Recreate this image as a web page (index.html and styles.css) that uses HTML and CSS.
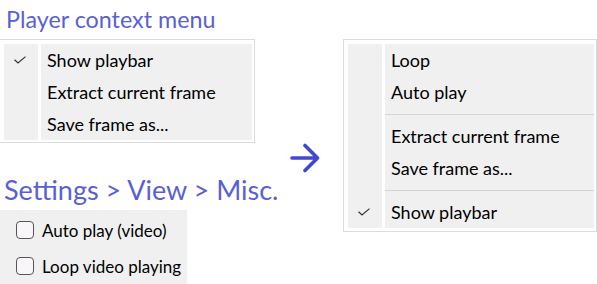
FILE: index.html
```html
<!DOCTYPE html>
<html>
<head>
  <title>Player context menu</title>
  <link rel="stylesheet" href="styles.css">
</head>
<body>
  <div class="page">
    <div class="left-col">
      <h2 class="title">Player context menu</h2>
      <div class="menu menu-old">
        <div class="gutter"></div>
        <div class="items">
          <div class="item"><span class="check"><svg width="12" height="8" viewBox="0 0 12 8"><polyline points="0.5,3.8 4,7 11.5,0.6" fill="none" stroke="#333" stroke-width="1.2"/></svg></span>Show playbar</div>
          <div class="item">Extract current frame</div>
          <div class="item">Save frame as...</div>
        </div>
      </div>

      <h2 class="title title-settings">Settings &gt; View &gt; Misc.</h2>
      <div class="settings">
        <label class="option"><span class="box"></span>Auto play (video)</label>
        <label class="option"><span class="box"></span>Loop video playing</label>
      </div>
    </div>

    <div class="arrow">
      <svg width="30" height="30" viewBox="0 0 30 30">
        <path d="M2 15 H27 M15 2.5 L27.5 15 L15 27.5" fill="none" stroke="#4148cf" stroke-width="3.6" stroke-linecap="round" stroke-linejoin="round"/>
      </svg>
    </div>

    <div class="menu menu-new">
      <div class="gutter"></div>
      <div class="items">
        <div class="item">Loop</div>
        <div class="item">Auto play</div>
        <div class="sep"></div>
        <div class="item">Extract current frame</div>
        <div class="item">Save frame as...</div>
        <div class="sep"></div>
        <div class="item"><span class="check"><svg width="12" height="8" viewBox="0 0 12 8"><polyline points="0.5,3.8 4,7 11.5,0.6" fill="none" stroke="#333" stroke-width="1.2"/></svg></span>Show playbar</div>
      </div>
    </div>
  </div>
</body>
</html>
```

FILE: styles.css
```css
body {
  margin: 0;
  background-color: #fff;
  color: #000;
  font-family: Lato, 'Open Sans', sans-serif;
}

.page {
  display: flex;
  align-items: flex-start;
}

.left-col {
  width: 290px;
}

.title {
  margin: 0;
  padding: 5px 0 0 6px;
  height: 39px;
  box-sizing: border-box;
  font-size: 23.3px;
  line-height: 28px;
  font-weight: normal;
  color: #5a5fd6;
  white-space: nowrap;
}

.title-settings {
  margin-top: 33px;
  height: 34px;
  padding-top: 0;
  padding-left: 4px;
  font-size: 27px;
}

.menu {
  display: flex;
  width: 254px;
  box-sizing: border-box;
  border: 1px solid #dcdcdc;
  background-color: #fff;
  padding: 4px 2px 2px 4px;
}

.menu-old {
  margin-left: -1px;
  width: 256px;
}

.menu-new {
  margin-top: 39px;
  margin-left: 23px;
  padding-bottom: 3px;
}

.gutter {
  width: 34px;
  margin-right: 3px;
  background-color: #f0f0f0;
}

.items {
  flex: 1;
  background-color: #f0f0f0;
}

.item {
  position: relative;
  height: 32px;
  line-height: 32px;
  padding-left: 6px;
  font-size: 18px;
  white-space: nowrap;
}

.check {
  position: absolute;
  left: -27px;
  top: 12px;
  line-height: 0;
}

.sep {
  height: 1px;
  margin: 6px 0 5px;
  background-color: #d4d4d4;
}

.arrow {
  margin-top: 143px;
  line-height: 0;
}

.settings {
  width: 187px;
  padding-top: 2px;
  background-color: #f0f0f0;
}

.option {
  display: flex;
  align-items: center;
  height: 36px;
  padding-left: 16px;
  font-size: 17px;
  white-space: nowrap;
}

.box {
  flex: none;
  width: 16px;
  height: 16px;
  margin-right: 8px;
  border: 1.5px solid #5e5060;
  border-radius: 4px;
  background-color: #f7f7f7;
}
```
